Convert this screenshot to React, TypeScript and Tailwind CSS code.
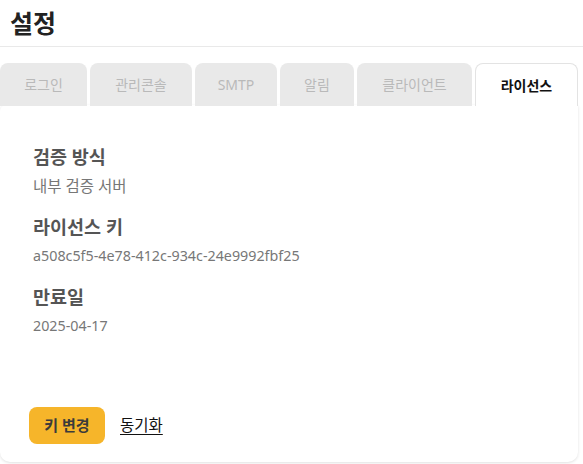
const tabs = [
  { name: "로그인", w: "w-[87px]" },
  { name: "관리콘솔", w: "w-[102px]" },
  { name: "SMTP", w: "w-[82px]" },
  { name: "알림", w: "w-[74px]" },
  { name: "클라이언트", w: "w-[115px]" },
  { name: "라이선스", w: "w-[103px]" },
]

const fields = [
  { label: "검증 방식", value: "내부 검증 서버", korean: true },
  { label: "라이선스 키", value: "a508c5f5-4e78-412c-934c-24e9992fbf25", korean: false },
  { label: "만료일", value: "2025-04-17", korean: false },
]

export default function App() {
  const active = "라이선스"

  return (
    <div
      className="w-[583px] h-[464px] bg-white overflow-hidden"
      style={{ fontFamily: '"Noto Sans", "Noto Sans CJK KR", sans-serif' }}
    >
      <div className="h-[47px] border-b border-[#e9e9e9] px-[10px] flex items-center">
        <h1 className="text-[25px] font-bold text-[#222] leading-none">설정</h1>
      </div>

      <div className="mt-[16px] flex gap-[3px]">
        {tabs.map((tab) => (
          <div
            key={tab.name}
            className={
              tab.name === active
                ? `${tab.w} h-[43px] flex items-center justify-center rounded-t-[8px] bg-white border border-b-0 border-[#e3e3e3] text-[14px] font-bold text-[#111] relative z-10`
                : `${tab.w} h-[43px] flex items-center justify-center rounded-t-[8px] bg-[#e9e9e9] text-[14px] text-[#b9b9b9]`
            }
          >
            {tab.name}
          </div>
        ))}
      </div>

      <div className="w-[578px] h-[357px] -mt-px bg-white rounded-b-[10px] rounded-tl-[6px] shadow-[0_1px_3px_rgba(0,0,0,0.12)] flex flex-col justify-between px-[33px] pt-[39px] pb-[18px]">
        <div className="flex flex-col">
          {fields.map((f) => (
            <div key={f.label} className="mb-[18px]">
              <div className="text-[18.5px] font-bold text-[#555] leading-[26px]">{f.label}</div>
              <div
                className={
                  f.korean
                    ? "mt-[6px] text-[15.5px] text-[#777] leading-[20px]"
                    : "mt-[6px] text-[14.3px] text-[#777] leading-[20px]"
                }
              >
                {f.value}
              </div>
            </div>
          ))}
        </div>
        <div className="flex items-center gap-[15px] -ml-[4px]">
          <button className="h-[37px] w-[76px] rounded-[8px] bg-[#f6b52a] text-[15px] font-bold text-[#3b3b3b]">
            키 변경
          </button>
          <a className="text-[15.5px] text-[#111] underline underline-offset-[3px]">동기화</a>
        </div>
      </div>
    </div>
  )
}
